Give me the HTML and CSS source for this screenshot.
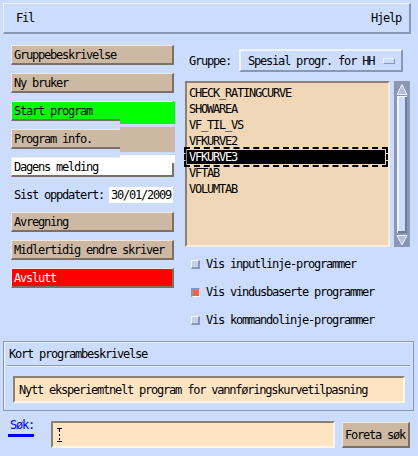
FILE: index.html
```html
<!DOCTYPE html>
<html>
<head>
<meta charset="utf-8">
<link rel="stylesheet" href="styles.css">
</head>
<body>
<div class="menubar"><span>Fil</span><span>Hjelp</span></div>
<div class="main">
  <div class="left">
    <div class="btn">Gruppebeskrivelse</div>
    <div class="btn">Ny bruker</div>
    <div class="btn green">Start program</div>
    <div class="btn">Program info.</div>
    <div class="btn white">Dagens melding</div>
    <div class="daterow"><span>Sist oppdatert:</span><span class="datefield">30/01/2009</span></div>
    <div class="btn">Avregning</div>
    <div class="btn">Midlertidig endre skriver</div>
    <div class="btn red">Avslutt</div>
    <div class="glitch g1"></div>
    <div class="glitch g2"></div>
    <div class="glitch g3"></div>
  </div>
  <div class="right">
    <div class="grouprow">
      <span>Gruppe:</span>
      <div class="option"><span>Spesial progr. for HH</span><span class="ind"></span></div>
    </div>
    <div class="listwrap">
      <div class="list">
        <div class="item">CHECK_RATINGCURVE</div>
        <div class="item">SHOWAREA</div>
        <div class="item">VF_TIL_VS</div>
        <div class="item">VFKURVE2</div>
        <div class="item sel">VFKURVE3</div>
        <div class="item">VFTAB</div>
        <div class="item">VOLUMTAB</div>
      </div>
      <svg class="scroll" width="16" height="166" viewBox="0 0 16 166">
        <rect x="0" y="0" width="16" height="166" fill="#8a97b4"/>
        <polygon points="8,3.5 3,13.5 13,13.5" fill="#b4c0dc" stroke="#eef3ff" stroke-width="1"/>
        <rect x="3" y="15" width="10" height="137" fill="#cddcfc"/>
        <rect x="3" y="15" width="2" height="137" fill="#eef3ff"/>
        <rect x="3" y="15" width="10" height="1" fill="#eef3ff"/>
        <rect x="11" y="16" width="2" height="136" fill="#6f7c9a"/>
        <rect x="4" y="150" width="9" height="2" fill="#6f7c9a"/>
        <polygon points="3,154.5 13,154.5 8,164" fill="#b4c0dc" stroke="#eef3ff" stroke-width="1"/>
      </svg>
    </div>
    <div class="checks">
      <div class="chk"><span class="box"></span><span>Vis inputlinje-programmer</span></div>
      <div class="chk"><span class="box on"></span><span>Vis vindusbaserte programmer</span></div>
      <div class="chk"><span class="box"></span><span>Vis kommandolinje-programmer</span></div>
    </div>
  </div>
</div>
<div class="frame">
  <div class="ftitle">Kort programbeskrivelse</div>
  <div class="sep"></div>
  <div class="desc">Nytt eksperiemtnelt program for vannføringskurvetilpasning</div>
</div>
<div class="search">
  <div class="sok"><div class="sokt">Søk:</div><div class="sokbar"></div></div>
  <div class="input">
    <svg class="cursor" width="5" height="14" viewBox="0 0 5 14">
      <rect x="0" y="0" width="5" height="1" fill="#000"/>
      <rect x="2" y="1" width="1" height="3" fill="#000"/>
      <rect x="2" y="6" width="1" height="2" fill="#000"/>
      <rect x="2" y="10" width="1" height="2" fill="#000"/>
      <rect x="0" y="13" width="5" height="1" fill="#000"/>
    </svg>
  </div>
  <div class="btn sbtn">Foreta søk</div>
</div>
</body>
</html>
```

FILE: styles.css
```css
* { box-sizing: border-box; }
html, body { margin: 0; padding: 0; }
body {
  width: 418px;
  height: 456px;
  overflow: hidden;
  background: #ccdcfc;
  font-family: "DejaVu Sans Mono", monospace;
  font-size: 12px;
  letter-spacing: -1.22px;
  color: #000;
}
.menubar {
  margin: 3px 7px 0 3px;
  height: 31px;
  display: flex;
  justify-content: space-between;
  align-items: center;
  padding: 0 8px 0 12px;
  border-top: 1px solid #eef3ff;
  border-left: 1px solid #eef3ff;
  border-bottom: 2px solid #8a97b4;
  border-right: 2px solid #8a97b4;
}
.main { display: flex; height: 307px; }
.left {
  position: relative;
  margin-left: 11px;
  width: 163px;
  padding-top: 11px;
  display: flex;
  flex-direction: column;
  gap: 8px;
}
.btn {
  height: 20px;
  background: #cdb9a3;
  border-top: 1px solid #f2e8dc;
  border-left: 1px solid #f2e8dc;
  border-bottom: 2px solid #7c7064;
  border-right: 2px solid #7c7064;
  padding-left: 2px;
  display: flex;
  align-items: center;
  white-space: nowrap;
}
.btn.green { background: #00ff00; }
.btn.white { background: #ffffff; }
.btn.red { background: #ff0000; color: #ffffff; }
.daterow {
  height: 19px;
  display: flex;
  align-items: center;
  padding-left: 3px;
}
.datefield {
  margin-left: 5px;
  width: 64px;
  height: 16px;
  background: #ffffff;
  padding-left: 2px;
  display: flex;
  align-items: center;
}
.glitch { position: absolute; left: 109px; width: 55px; }
.g1 { top: 68px; height: 22px; background: #00ff00; }
.g2 { top: 93px; height: 25px; background: #cdb9a3; }
.g3 { top: 121px; height: 8px; background: #ffffff; }

.right { margin-left: 11px; width: 225px; padding-top: 15px; }
.grouprow { display: flex; align-items: center; height: 23px; padding-left: 4px; }
.option {
  margin-left: 8px;
  width: 164px;
  height: 23px;
  border: 2px solid;
  border-color: #eef3ff #8a97b4 #8a97b4 #eef3ff;
  display: flex;
  align-items: center;
  justify-content: space-between;
  padding: 0 6px 0 7px;
}
.ind {
  width: 12px;
  height: 6px;
  border: 1px solid;
  border-color: #eef3ff #8a97b4 #8a97b4 #eef3ff;
}
.listwrap { display: flex; margin-top: 9px; height: 166px; }
.list {
  width: 205px;
  height: 166px;
  background: #efd7b7;
  border: 2px solid;
  border-color: #8a8276 #f8eedf #f8eedf #8a8276;
  padding-top: 2px;
}
.item { height: 16px; line-height: 16px; padding-left: 2px; white-space: nowrap; }
.item.sel {
  background: #000;
  color: #fff;
  outline: 2px dashed #000;
  outline-offset: 1px;
  margin: 1px 3px 1px 0;
  height: 14px;
  line-height: 14px;
}
.scroll { display: block; margin-left: 4px; }
.checks { margin-top: 3px; }
.chk { height: 28px; display: flex; align-items: center; padding-left: 6px; }
.box {
  width: 9px;
  height: 9px;
  margin-right: 6px;
  background: #c6d0ea;
  border-top: 1px solid #f4f7ff;
  border-left: 1px solid #f4f7ff;
  border-bottom: 2px solid #8a97b4;
  border-right: 2px solid #8a97b4;
}
.box.on {
  background: #ff6040;
  border-top: 2px solid #8a97b4;
  border-left: 2px solid #8a97b4;
  border-bottom: 1px solid #f4f7ff;
  border-right: 1px solid #f4f7ff;
}
.frame {
  margin: 0 4px 0 3px;
  height: 70px;
  border: 1px solid #8a97b4;
  box-shadow: inset 1px 1px 0 #eef3ff;
}
.ftitle { height: 23px; display: flex; align-items: center; padding-left: 5px; }
.sep { border-top: 1px solid #8a97b4; border-bottom: 1px solid #eef3ff; margin: 0 3px; }
.desc {
  margin: 9px 8px 0 9px;
  height: 27px;
  background: #ffe4c4;
  border-top: 2px solid #8c8070;
  border-left: 2px solid #8c8070;
  border-bottom: 2px solid #fff6e8;
  border-right: 2px solid #fff6e8;
  display: flex;
  align-items: center;
  padding-left: 4px;
  white-space: nowrap;
}
.search { display: flex; align-items: flex-start; margin-top: 10px; height: 27px; }
.sok { margin-left: 8px; width: 26px; margin-top: -3px; }
.sokt { height: 14px; line-height: 14px; padding-left: 2px; color: #0000ff; }
.sokbar { margin-top: 2px; height: 3px; background: #0000ff; }
.input {
  margin-left: 17px;
  width: 284px;
  height: 27px;
  background: #ffe4c4;
  border-top: 2px solid #8c8070;
  border-left: 2px solid #8c8070;
  border-bottom: 2px solid #fff6e8;
  border-right: 2px solid #fff6e8;
  padding: 5px 0 0 4px;
}
.cursor { display: block; }
.sbtn { margin-left: 7px; margin-top: 1px; width: 68px; height: 26px; }
```
